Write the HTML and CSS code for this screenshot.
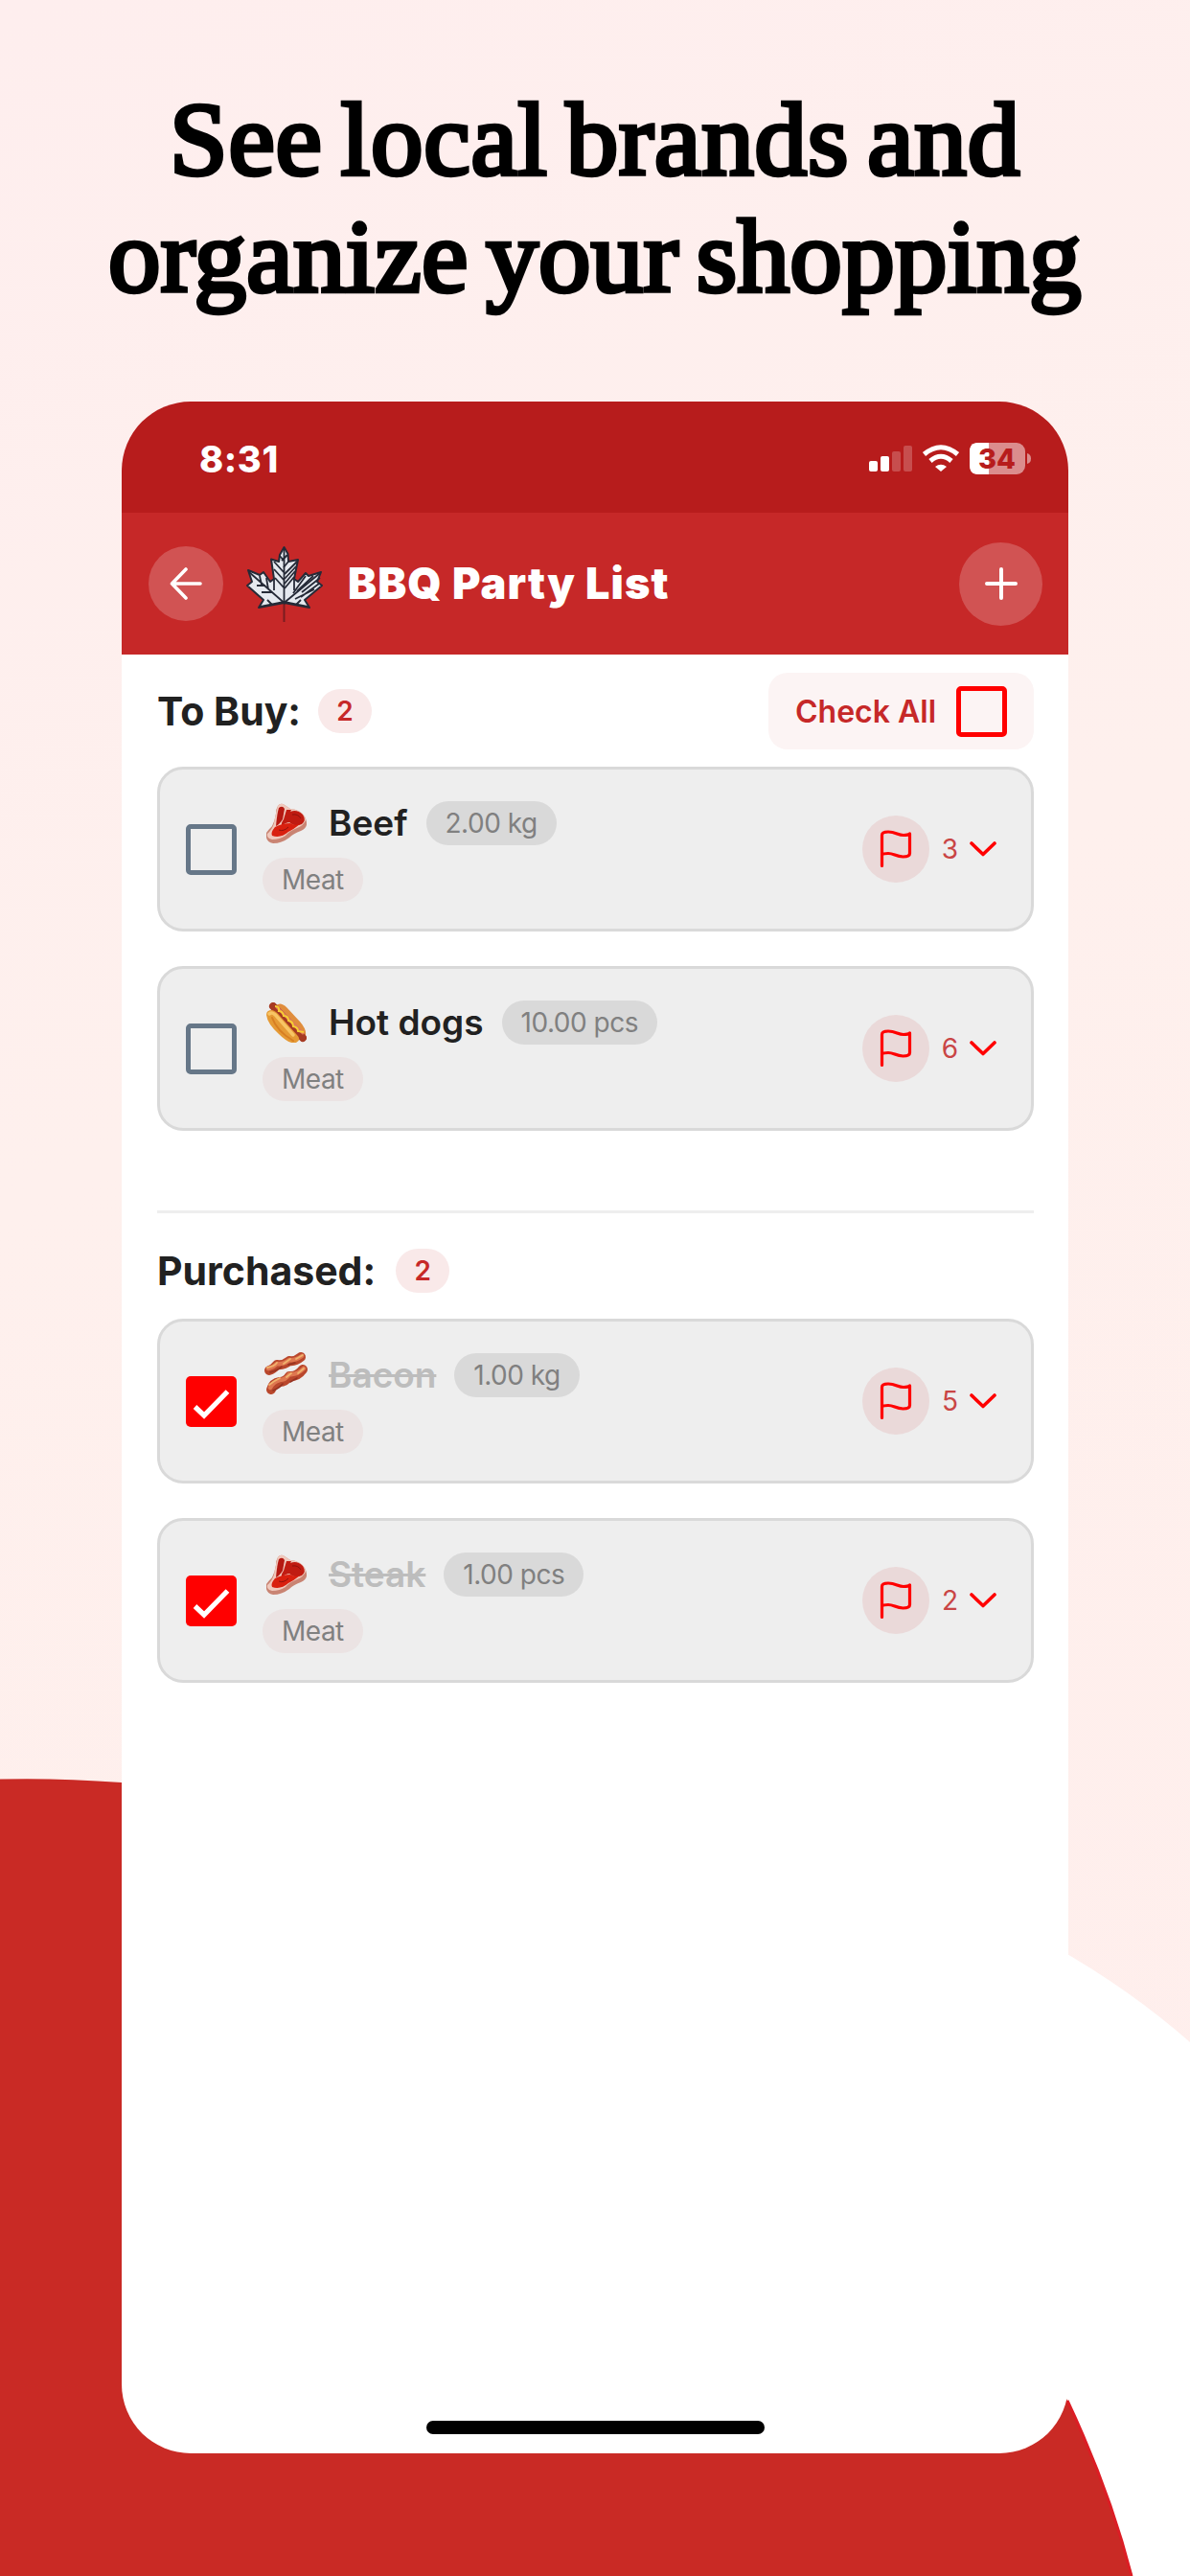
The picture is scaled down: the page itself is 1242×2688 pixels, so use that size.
FILE: index.html
```html
<!DOCTYPE html>
<html lang="en">
<head>
<meta charset="utf-8">
<title>BBQ Party List</title>
<link rel="stylesheet" href="styles.css">
</head>
<body>
<svg class="defs" aria-hidden="true">
  <symbol id="steak" viewBox="0 0 42 42">
    <path d="M12 3Q15-1 19 2L25 6Q30 6 35 9Q41 13 42 20Q43 26 36 29Q28 32 24 36Q16 42 7 42Q1 41 0 36V31Q2 28 6 24Q9 18 10 11Q10 6 12 3Z" fill="#c98473"/>
    <path d="M12 3Q15-1 19 2L25 6Q30 6 35 9Q41 13 41 18Q39 23 32 26Q24 29 20 34Q14 38 6 38Q0 37 1 32Q6 28 8 21Q10 10 12 3Z" fill="#f0c9bd"/>
    <path d="M13 5Q17 2 19 6L17 17Q13 23 10 24Q11 12 13 5Z" fill="#b51912"/>
    <path d="M21 7L26 7Q23 12 25 20Q20 20 16 24Q15 21 18 17ZM25 9Q32 6 38 12Q42 18 37 22Q30 25 25 21Q22 15 25 9Z" fill="#c01c12"/>
    <path d="M9 25Q17 21 25 21Q29 24 35 22Q29 27 23 30Q15 37 6 34Q4 31 9 25Z" fill="#d9200f"/>
    <path d="M27 12Q33 11 36 16M13 28Q18 30 23 25" fill="none" stroke="#8f120d" stroke-width="1"/>
  </symbol>
  <symbol id="hotdog" viewBox="0 0 42 42">
    <path d="M10 3Q15-1 21 5L35 20Q42 28 41 34L36 38Z" fill="#e08d3c"/>
    <path d="M7 4L38 37" stroke="#a63a22" stroke-width="8" stroke-linecap="round"/>
    <path d="M11 5L38 32" stroke="#df7b5c" stroke-width="3" stroke-linecap="round"/>
    <path d="M0 13Q0 8 6 8Q10 9 14 14L32 34Q37 39 31 42Q24 44 13 33Q1 22 0 13Z" fill="#e59a35"/>
    <path d="M3 12Q7 9 12 16L28 34" fill="none" stroke="#f8c565" stroke-width="3.5" stroke-linecap="round"/>
    <path d="M6 16Q11 30 28 40" fill="none" stroke="#d77e22" stroke-width="2" stroke-linecap="round"/>
    <path d="M9 4Q14 4 13 9Q17 9 18 14Q23 14 23 19Q28 20 28 25Q33 26 33 30L39 31" fill="none" stroke="#f7cf32" stroke-width="2"/>
  </symbol>
  <symbol id="bacon" viewBox="13 10 42 42" overflow="visible">
    <g fill="none" stroke-linecap="round" stroke-linejoin="round">
      <path d="M16 26Q20 25 24 20Q31 21 37 16Q43 17 49 12M18 46Q20 39 27 38Q33 38 37 32Q45 33 51 25" stroke="#b9472c" stroke-width="10"/>
      <path d="M15 24Q20 23 24 19Q31 20 37 15Q43 16 50 11M17 44Q20 38 27 36Q33 36 37 30Q45 31 52 24" stroke="#de7750" stroke-width="4.500"/>
      <path d="M14 23Q21 22 24 18M31 19L38 14M44 14L51 10M16 41Q21 37 27 34M34 33L39 29M46 29L52 24" stroke="#f0b36d" stroke-width="1.8"/>
      <path d="M17 28Q25 26 29 22M36 20L43 18M20 47Q27 44 30 40M38 38L45 34" stroke="#963322" stroke-width="1.6"/>
    </g>
  </symbol>
  <symbol id="flag" viewBox="0 0 34 40">
    <path d="M2.5 37.500V5.500C2.500 3 5 2 9 2C17 2 19 5.500 25 5.500C28 5.500 30.500 5 31.500 4V24.500C31.500 27 28.500 28 24.500 28C17 28 15 24.500 9 24.500C5 24.500 3.500 25 2.500 26" fill="none" stroke="#f00" stroke-width="3.2" stroke-linecap="round" stroke-linejoin="round"/>
  </symbol>
  <symbol id="chevron" viewBox="0 0 28 16">
    <path d="M2 2L14 13.500L26 2" fill="none" stroke="#f00" stroke-width="3.600" stroke-linecap="round" stroke-linejoin="round"/>
  </symbol>
  <symbol id="check" viewBox="0 0 53 53">
    <path d="M9.500 32L19 41L43.500 16" fill="none" stroke="#fff" stroke-width="5.200"/>
  </symbol>
</svg>
<main class="poster">
  <svg class="backdrop" viewBox="0 0 1242 2688" aria-hidden="true">
    <path d="M1020 1990Q1150 2050 1242 2131V2688H1020Z" fill="#fff"/>
    <path d="M0 1856.500Q60 1855 127 1860C560 1900 930 2100 1114 2505Q1158 2598 1182 2688H0Z" fill="#c92a25"/>
    <path d="M1114 2505Q1158 2598 1181 2688" fill="none" stroke="#dc1d24" stroke-width="3"/>
  </svg>
  <h1 class="headline"><span class="line-one">See local brands and</span><span class="line-two">organize your shopping</span></h1>
  <section class="phone">
    <div class="status">
      <span class="clock">8:31</span>
      <svg class="indicators" width="170" height="34" viewBox="0 0 170 34">
        <g fill="#fff">
          <rect x="0" y="19" width="9" height="11" rx="2"/><rect x="12" y="14" width="9" height="16" rx="2"/>
          <g opacity=".22"><rect x="24" y="9" width="9" height="21" rx="2"/><rect x="36" y="3" width="9" height="27" rx="2"/></g>
          <path d="M69 25Q75 20.500 81 25L75 30Z"/>
        </g>
        <g fill="none" stroke="#fff" stroke-width="5"><path d="M57.500 12Q75-2.500 92.500 12"/><path d="M64 19Q75 9.500 86 19"/></g>
        <rect x="105" y="0" width="58" height="33" rx="9" fill="#db8d8d"/>
        <path d="M125 0V33H114Q105 33 105 24V9Q105 0 114 0Z" fill="#fff"/>
        <path d="M165 11Q169 12 169 16.500Q169 21 165 22Z" fill="#db8d8d"/>
        <text class="battery" x="133.500" y="27" text-anchor="middle">34</text>
      </svg>
    </div>
    <header class="bar">
      <div class="back"><svg width="34" height="34" viewBox="0 0 34 34"><path d="M17 2L2.500 17L17 32M2.500 17H32" fill="none" stroke="#fff" stroke-width="3.600" stroke-linecap="round" stroke-linejoin="round"/></svg></div>
      <svg class="leaf" width="96" height="96" viewBox="0 0 96 96">
        <path d="M46.500 67V88" stroke="#7a1c20" stroke-width="2"/>
        <path d="M46.500 10L42 18L41 25L33 22.500L36 43L32 46L25 36L21 39L9 34L13 46L8 50L25 65L20 73L46.500 68L73 73L68 65L86 50L81 46L85 36L72 40L69 37L61 46L57 43L61 23L51 25L50.500 17Z" fill="#e5e9ef" stroke="#252a37" stroke-width="2" stroke-linejoin="round"/>
        <g fill="none" stroke="#252a37" stroke-width="1.800">
          <path d="M46.500 12V68L10 36M46.500 68L84 37M22 72L46.500 67L71 72M36 43V55M57 43V55M36 25L46 36M36 33L46 44M37 42L46 52M42 19L47 25M18 50H27M23 57H34M21 40L23 49M28 42L30 54"/>
          <path d="M50 18L44 24M51 25L46 31M60 25L47 38M59 30L47 43M58 35L47 48M57 41L47 53M69 40L56 58M77 40L60 56M84 42L65 57M83 48L64 62M78 54L58 64M29 65L34 70M64 65L59 70"/>
        </g>
      </svg>
      <span class="title">BBQ Party List</span>
      <div class="add"><svg width="34" height="34" viewBox="0 0 34 34"><path d="M17 2V32M2 17H32" stroke="#fff" stroke-width="4" stroke-linecap="round"/></svg></div>
    </header>
    <div class="content">
      <div class="section-head buy">
        <h2>To Buy:</h2><span class="badge">2</span>
        <div class="check-all"><span>Check All</span><i class="box red"></i></div>
      </div>
      <div class="items">
        <article class="item">
          <i class="box"></i>
          <div class="info">
            <div class="row"><svg class="emoji"><use href="#steak"/></svg><span class="name">Beef</span><span class="pill">2.00 kg</span></div>
            <span class="pill tag">Meat</span>
          </div>
          <div class="flag"><svg width="34" height="40"><use href="#flag"/></svg></div><span class="count">3</span><svg class="chev"><use href="#chevron"/></svg>
        </article>
        <article class="item">
          <i class="box"></i>
          <div class="info">
            <div class="row"><svg class="emoji"><use href="#hotdog"/></svg><span class="name">Hot dogs</span><span class="pill">10.00 pcs</span></div>
            <span class="pill tag">Meat</span>
          </div>
          <div class="flag"><svg width="34" height="40"><use href="#flag"/></svg></div><span class="count">6</span><svg class="chev"><use href="#chevron"/></svg>
        </article>
      </div>
      <div class="divider"></div>
      <div class="section-head bought"><h2>Purchased:</h2><span class="badge">2</span></div>
      <div class="items">
        <article class="item done">
          <i class="box checked"><svg width="53" height="53"><use href="#check"/></svg></i>
          <div class="info">
            <div class="row"><svg class="emoji"><use href="#bacon"/></svg><span class="name">Bacon</span><span class="pill">1.00 kg</span></div>
            <span class="pill tag">Meat</span>
          </div>
          <div class="flag"><svg width="34" height="40"><use href="#flag"/></svg></div><span class="count">5</span><svg class="chev"><use href="#chevron"/></svg>
        </article>
        <article class="item done">
          <i class="box checked"><svg width="53" height="53"><use href="#check"/></svg></i>
          <div class="info">
            <div class="row"><svg class="emoji"><use href="#steak"/></svg><span class="name">Steak</span><span class="pill">1.00 pcs</span></div>
            <span class="pill tag">Meat</span>
          </div>
          <div class="flag"><svg width="34" height="40"><use href="#flag"/></svg></div><span class="count">2</span><svg class="chev"><use href="#chevron"/></svg>
        </article>
      </div>
    </div>
    <div class="home"></div>
  </section>
</main>
</body>
</html>
```
FILE: styles.css
```css
* { box-sizing: border-box; }
body { margin: 0; font-family: Inter, "Liberation Sans", sans-serif; }
svg { display: block; flex: none; }
.defs { position: absolute; width: 0; height: 0; }
.poster {
  position: relative; width: 1242px; height: 2688px; overflow: hidden;
  display: flex; flex-direction: column; align-items: center;
  background: linear-gradient(160deg, #feeeee, #fef0ed 40%, #ffeeec);
}
.backdrop { position: absolute; inset: 0; width: 1242px; height: 2688px; }
.headline {
  position: relative; height: 419px; margin: 0; padding-top: 85px;
  display: flex; flex-direction: column; align-items: center; flex: none;
  font: 400 109px/122px "Liberation Serif", serif; color: #000;
  -webkit-text-stroke: 4.500px #000; white-space: nowrap; word-spacing: -9px;
}
.line-one { letter-spacing: 0.8px; }
.line-two { letter-spacing: 0.3px; }
.phone {
  position: relative; width: 988px; height: 2141px; flex: none;
  display: flex; flex-direction: column;
  border-radius: 72px; overflow: hidden; background: #fff;
}
.status {
  height: 116px; padding: 0 38px 0 81px; background: #b71c1c;
  display: flex; align-items: center; justify-content: space-between;
}
.clock { color: #fff; font-size: 38px; font-weight: 800; line-height: 46px; margin-top: 4px; letter-spacing: 0.6px; }
.indicators { margin-top: 3px; }
.battery { font: 800 29px Inter, sans-serif; fill: #b71c1c; }
.bar { height: 148px; background: #c62828; display: flex; align-items: center; padding: 0 27px 0 28px; }
.back, .add, .flag { display: flex; align-items: center; justify-content: center; border-radius: 50%; flex: none; }
.back { width: 78px; height: 78px; margin-right: 17px; background: #d15353; }
.leaf { margin-right: 17px; }
.add { width: 87px; height: 87px; background: #d15353; margin-left: auto; }
.title { color: #fff; font-size: 45px; font-weight: 900; line-height: 54px; letter-spacing: 1.1px; }
.content { padding: 0 36px 0 37px; flex: 1; }
.section-head { display: flex; align-items: center; }
.buy { height: 80px; margin: 19px 0 18px; }
.bought { height: 46px; margin: 37px 0 27px; }
h2 { margin: 0; font-size: 41px; line-height: 50px; font-weight: 700; color: #212121; }
.badge {
  width: 56px; height: 46px; border-radius: 23px; margin-left: 18px;
  display: flex; align-items: center; justify-content: center;
  background: #f9e9e9; color: #c62828; font-size: 28px; font-weight: 600;
}
.bought .badge { margin-left: 21px; }
.check-all {
  margin-left: auto; width: 277px; height: 80px; padding: 0 28px; border-radius: 20px; background: #fcf4f4;
  display: flex; align-items: center; justify-content: space-between; color: #c62828; font-size: 32px; font-weight: 600;
}
.box { width: 53px; height: 53px; border: 5px solid #667788; border-radius: 5px; flex: none; }
.box.red { border-color: #f00; }
.box.checked { border: 0; background: #f00; }
.items { display: flex; flex-direction: column; gap: 36px; }
.item {
  height: 172px; border: 3px solid #d9d9d9; border-radius: 27px; background: #eee;
  display: flex; align-items: center; padding: 0 36px 0 27px;
}
.info { flex: 1; margin-left: 27px; display: flex; flex-direction: column; align-items: flex-start; gap: 13px; padding-top: 5px; }
.row { display: flex; align-items: center; height: 46px; padding-left: 4px; }
.emoji { width: 42px; height: 42px; margin-right: 23px; overflow: visible; }
.name { font-size: 37px; line-height: 46px; font-weight: 600; color: #212121; margin-right: 19px; }
.done .name { color: #bdbdbd; text-decoration: line-through; }
.pill { height: 46px; line-height: 46px; border-radius: 23px; padding: 0 20px; background: #d9d9d9; color: #808080; font-size: 28px; letter-spacing: -0.5px; }
.tag { background: #ebe3e3; }
.flag { width: 70px; height: 70px; background: #ead9d9; }
.count { color: #c94545; font-size: 28px; margin: 0 12px 0 13px; }
.chev { width: 28px; height: 16px; }
.divider { height: 3px; background: #eee; margin-top: 83px; }
.home { width: 353px; height: 14px; border-radius: 7px; background: #000; margin: 0 auto 20px; flex: none; }
```
